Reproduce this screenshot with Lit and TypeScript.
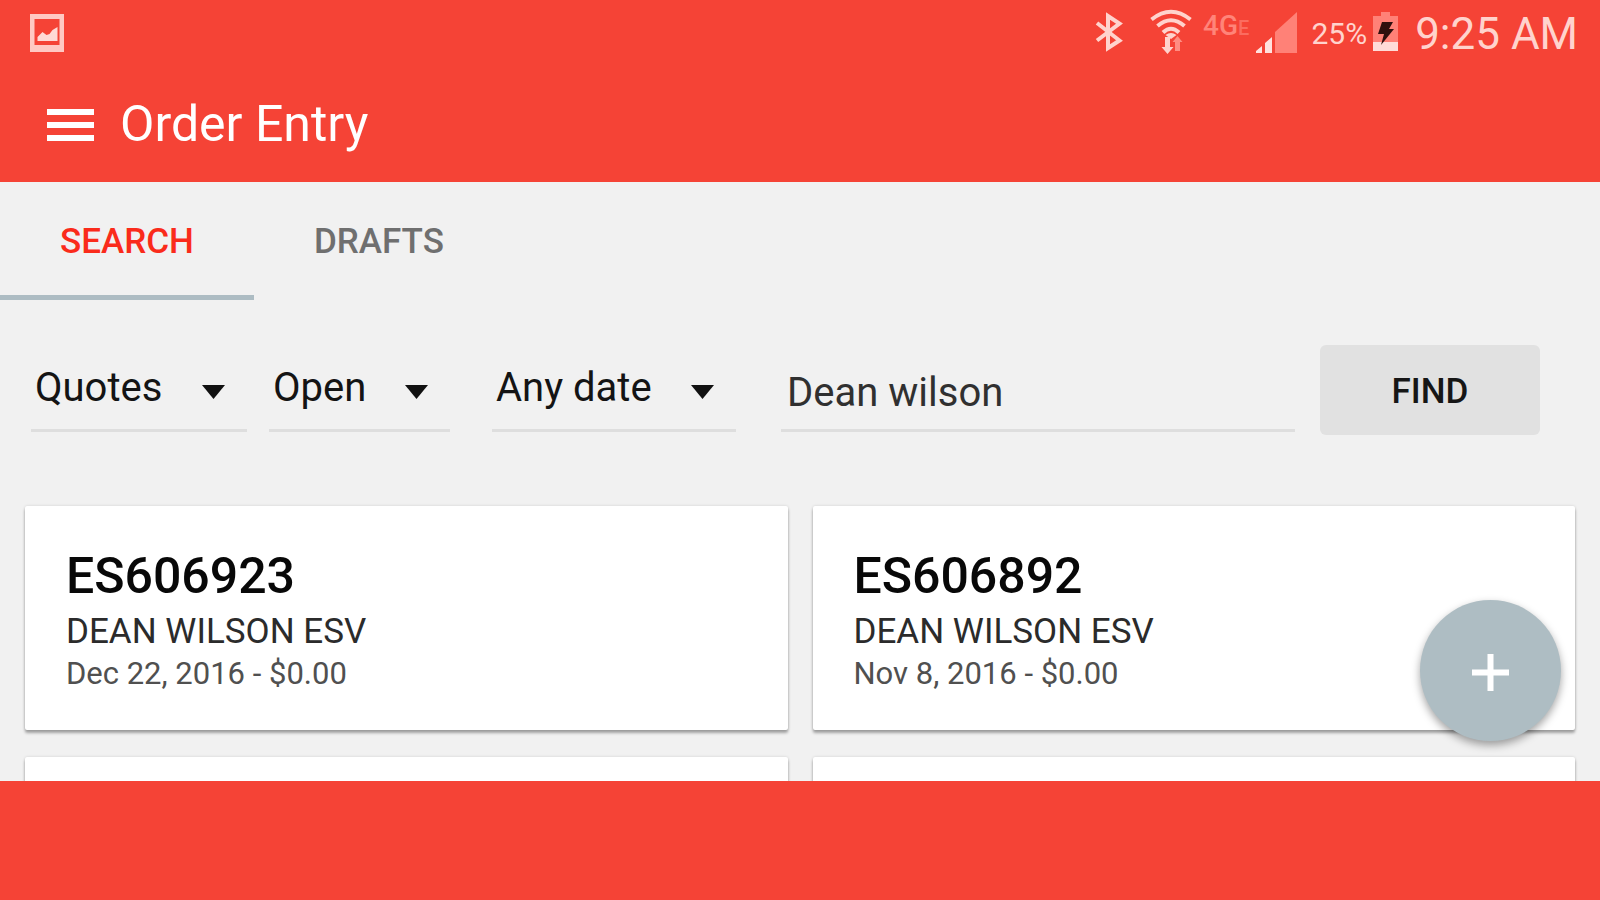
import { LitElement, html, css, svg, nothing } from "lit";
import { customElement, property, state } from "lit/decorators.js";
import { classMap } from "lit/directives/class-map.js";

interface Order {
  id: string;
  customer: string;
  date: string;
  total: string;
}

const ORDERS: Order[] = [
  { id: "ES606923", customer: "DEAN WILSON ESV", date: "Dec 22, 2016", total: "$0.00" },
  { id: "ES606892", customer: "DEAN WILSON ESV", date: "Nov 8, 2016", total: "$0.00" },
];

@customElement("status-bar")
export class StatusBar extends LitElement {
  static styles = css`
    :host {
      display: flex;
      align-items: center;
      justify-content: space-between;
      height: 68px;
      padding: 0 22px 0 29px;
      box-sizing: border-box;
      color: #ffd3cd;
    }
    svg {
      display: block;
      flex: none;
    }
    .tray {
      display: flex;
      align-items: center;
    }
    .bluetooth,
    .wifi,
    .signal,
    .battery {
      margin-bottom: 4px;
    }
    .wifi {
      margin-left: 27px;
    }
    .network {
      display: flex;
      align-items: baseline;
      align-self: flex-start;
      margin-left: 11px;
      color: #ff8479;
      font-size: 28px;
      line-height: 36px;
      font-weight: 500;
    }
    .lte {
      color: #fb6c60;
      font-size: 20px;
    }
    .signal {
      margin-left: 7px;
    }
    .percent {
      margin-left: 14px;
      font-size: 30px;
      line-height: 36px;
    }
    .battery {
      margin-left: 6px;
    }
    .clock {
      margin-left: 16px;
      font-size: 44px;
      line-height: 52px;
    }
  `;

  render() {
    return html`
      <svg width="36" height="40" viewBox="0 0 36 40" aria-hidden="true">
        <path fill="#ffc9c3" fill-rule="evenodd" d="M1 0h34v38H1zM5.500 5v26h25V5z" />
        <path fill="#ffd9d5" d="M8.500 27v-4l5-5 4 3 3-1 3-4 5-3v14z" />
      </svg>
      <div class="tray">
        <svg class="bluetooth" width="28" height="40" viewBox="0 0 28 40" aria-hidden="true">
          <path
            fill="none"
            stroke="currentColor"
            stroke-width="4"
            d="M2 11 24.500 28.500 13 36V4l11.500 7.500L2 28.500"
          />
        </svg>
        <svg class="wifi" width="42" height="46" viewBox="0 0 42 46" aria-hidden="true">
          <g fill="none" stroke="currentColor" stroke-width="4">
            <path d="M1.500 10.500Q21-5 40.500 10.500" />
            <path d="M7.500 17Q21 5.500 34.500 17" />
            <path d="M13 23.500Q21 16 29 23.500" />
          </g>
          <path fill="currentColor" d="M15.500 26q5.500-4 11 0L21 30zM15 28h5v10h3.500L17.500 45 11.500 38H15z" />
          <path fill="#ff8d82" d="M25 42V33h-2.500L27.500 27 32.500 33H30v9z" />
        </svg>
        <div class="network"><span>4G</span><span class="lte">E</span></div>
        <svg class="signal" width="41" height="41" viewBox="0 0 41 41" aria-hidden="true">
          <path fill="#ff8177" d="M19 41V20L41 0v41z" />
          <path fill="#ffe2de" d="M0 41v-2l6-5v7zM9 41V31l7-6v16z" />
        </svg>
        <span class="percent">25%</span>
        <svg class="battery" width="26" height="40" viewBox="0 0 26 40" aria-hidden="true">
          <path fill="#ff8177" d="M8 0h9v4h8v27H0V4h8z" />
          <path fill="#ffdcd8" d="M0 30h25v9H0z" />
          <path fill="#30100e" d="M9 10h11l-4 7h5L8 33l3-11H5z" />
        </svg>
        <span class="clock">9:25 AM</span>
      </div>
    `;
  }
}

@customElement("order-card")
export class OrderCard extends LitElement {
  @property({ attribute: false }) order?: Order;

  static styles = css`
    :host {
      display: block;
      min-height: 223px;
      padding: 40px 41px;
      box-sizing: border-box;
      background: #fff;
      border-radius: 2px;
      box-shadow: 0 3px 3px rgba(0, 0, 0, 0.32), 0 0 3px rgba(0, 0, 0, 0.14);
    }
    .id {
      margin: 0;
      color: #080808;
      font-size: 50px;
      line-height: 60px;
      font-weight: 500;
    }
    .customer,
    .meta {
      margin: 0;
    }
    .customer {
      color: #2b2b2b;
      font-size: 35px;
      line-height: 52px;
    }
    .meta {
      color: #505050;
      font-size: 31px;
      line-height: 32px;
    }
  `;

  render() {
    const o = this.order;
    if (!o) return nothing;
    return html`
      <h2 class="id">${o.id}</h2>
      <p class="customer">${o.customer}</p>
      <p class="meta">${o.date} - ${o.total}</p>
    `;
  }
}

@customElement("app-root")
export class AppRoot extends LitElement {
  @state() private tab = "SEARCH";
  @state() private query = "Dean wilson";

  static styles = css`
    :host {
      display: flex;
      flex-direction: column;
      height: 100vh;
      overflow: hidden;
      background: #f1f1f1;
      font-family: Roboto, "Liberation Sans", sans-serif;
    }
    button,
    select,
    input {
      font: inherit;
      color: inherit;
      margin: 0;
      padding: 0;
      border: 0;
      border-radius: 0;
      background: none;
      outline-offset: -2px;
    }
    button {
      cursor: pointer;
    }
    svg {
      display: block;
    }
    .top {
      flex: none;
      background: #f54336;
    }
    .appbar {
      display: flex;
      align-items: center;
      gap: 26px;
      height: 114px;
      padding: 0 47px;
      box-sizing: border-box;
      color: #fff;
    }
    .title {
      margin: 0;
      padding-bottom: 2px;
      font-size: 50px;
      line-height: 60px;
      font-weight: 400;
    }
    .tabs {
      display: flex;
      flex: none;
    }
    .tab {
      height: 118px;
      padding: 6px 60px 0;
      box-sizing: border-box;
      border-bottom: 5px solid transparent;
      color: #6f6f6f;
      font-size: 35px;
      line-height: 40px;
      font-weight: 500;
    }
    .tab.active {
      color: #fa2b1b;
      border-bottom-color: #adbcc3;
    }
    .filters {
      display: flex;
      flex: none;
      gap: 25px;
      align-items: center;
      padding: 45px 60px 0 31px;
      color: #141414;
      font-size: 40px;
      line-height: 48px;
    }
    .choices {
      display: flex;
      gap: 22px;
      margin-right: 20px;
    }
    .choice {
      display: grid;
      align-items: center;
      height: 84px;
      box-sizing: border-box;
      border-bottom: 3px solid #dedede;
    }
    .choice > * {
      grid-area: 1 / 1;
    }
    .choice select {
      appearance: none;
      width: 100%;
      height: 81px;
      padding: 0 0 2px 4px;
      box-sizing: border-box;
    }
    .choice svg {
      justify-self: end;
      margin: 6px 22px 0 0;
      pointer-events: none;
    }
    .type {
      width: 216px;
    }
    .status {
      width: 181px;
    }
    .date {
      width: 244px;
      margin-left: 20px;
    }
    .query {
      flex: 1;
      min-width: 0;
      height: 84px;
      padding: 8px 6px 0;
      box-sizing: border-box;
      border-bottom: 3px solid #dedede;
      color: #303030;
    }
    .find {
      width: 220px;
      height: 90px;
      padding-top: 4px;
      border-radius: 6px;
      background: #e1e1e1;
      color: #161616;
      font-size: 35px;
      line-height: 40px;
      font-weight: 500;
    }
    .results {
      position: relative;
      flex: 1;
      min-height: 0;
      overflow: hidden;
    }
    .grid {
      display: grid;
      grid-template-columns: 1fr 1fr;
      gap: 27px 25px;
      padding: 71px 25px 0;
    }
    .fab {
      position: absolute;
      right: 39px;
      bottom: 40px;
      display: grid;
      place-items: center;
      width: 141px;
      height: 141px;
      padding-top: 4px;
      border-radius: 50%;
      background: #aebdc3;
      box-shadow: 0 4px 8px rgba(0, 0, 0, 0.36);
    }
    .bottom {
      flex: none;
      height: 119px;
      background: #f54336;
    }
  `;

  private choice(name: string, label: string, value: string) {
    return html`
      <div class="choice ${name}">
        <select aria-label=${label}>
          <option>${value}</option>
        </select>
        <svg width="23" height="14" viewBox="0 0 23 14" aria-hidden="true">
          ${svg`<path fill="#111" d="M0 0h23L11.500 14z" />`}
        </svg>
      </div>
    `;
  }

  render() {
    return html`
      <header class="top">
        <status-bar></status-bar>
        <div class="appbar">
          <button aria-label="Menu">
            <svg width="47" height="32" viewBox="0 0 47 32" aria-hidden="true">
              <path fill="#fff" d="M0 0h47v6H0zM0 13h47v6H0zM0 26h47v6H0z" />
            </svg>
          </button>
          <h1 class="title">Order Entry</h1>
        </div>
      </header>
      <nav class="tabs" role="tablist">
        ${["SEARCH", "DRAFTS"].map(
          (t) => html`
            <button
              role="tab"
              aria-selected=${t === this.tab}
              class=${classMap({ tab: true, active: t === this.tab })}
              @click=${() => (this.tab = t)}
            >
              ${t}
            </button>
          `,
        )}
      </nav>
      <form class="filters" @submit=${(e: Event) => e.preventDefault()}>
        <div class="choices">
          ${this.choice("type", "Type", "Quotes")} ${this.choice("status", "Status", "Open")}
          ${this.choice("date", "Date", "Any date")}
        </div>
        <input
          class="query"
          type="text"
          aria-label="Customer"
          .value=${this.query}
          @input=${(e: Event) => (this.query = (e.target as HTMLInputElement).value)}
        />
        <button class="find">FIND</button>
      </form>
      <main class="results">
        <div class="grid">
          ${ORDERS.map((o) => html`<order-card .order=${o}></order-card>`)}
          <order-card></order-card>
          <order-card></order-card>
        </div>
        <button class="fab" aria-label="New order">
          <svg width="37" height="37" viewBox="0 0 37 37" aria-hidden="true">
            <path fill="#fff" d="M15.500 0h6v15.500H37v6H21.500V37h-6V21.500H0v-6h15.500z" />
          </svg>
        </button>
      </main>
      <footer class="bottom"></footer>
    `;
  }
}
